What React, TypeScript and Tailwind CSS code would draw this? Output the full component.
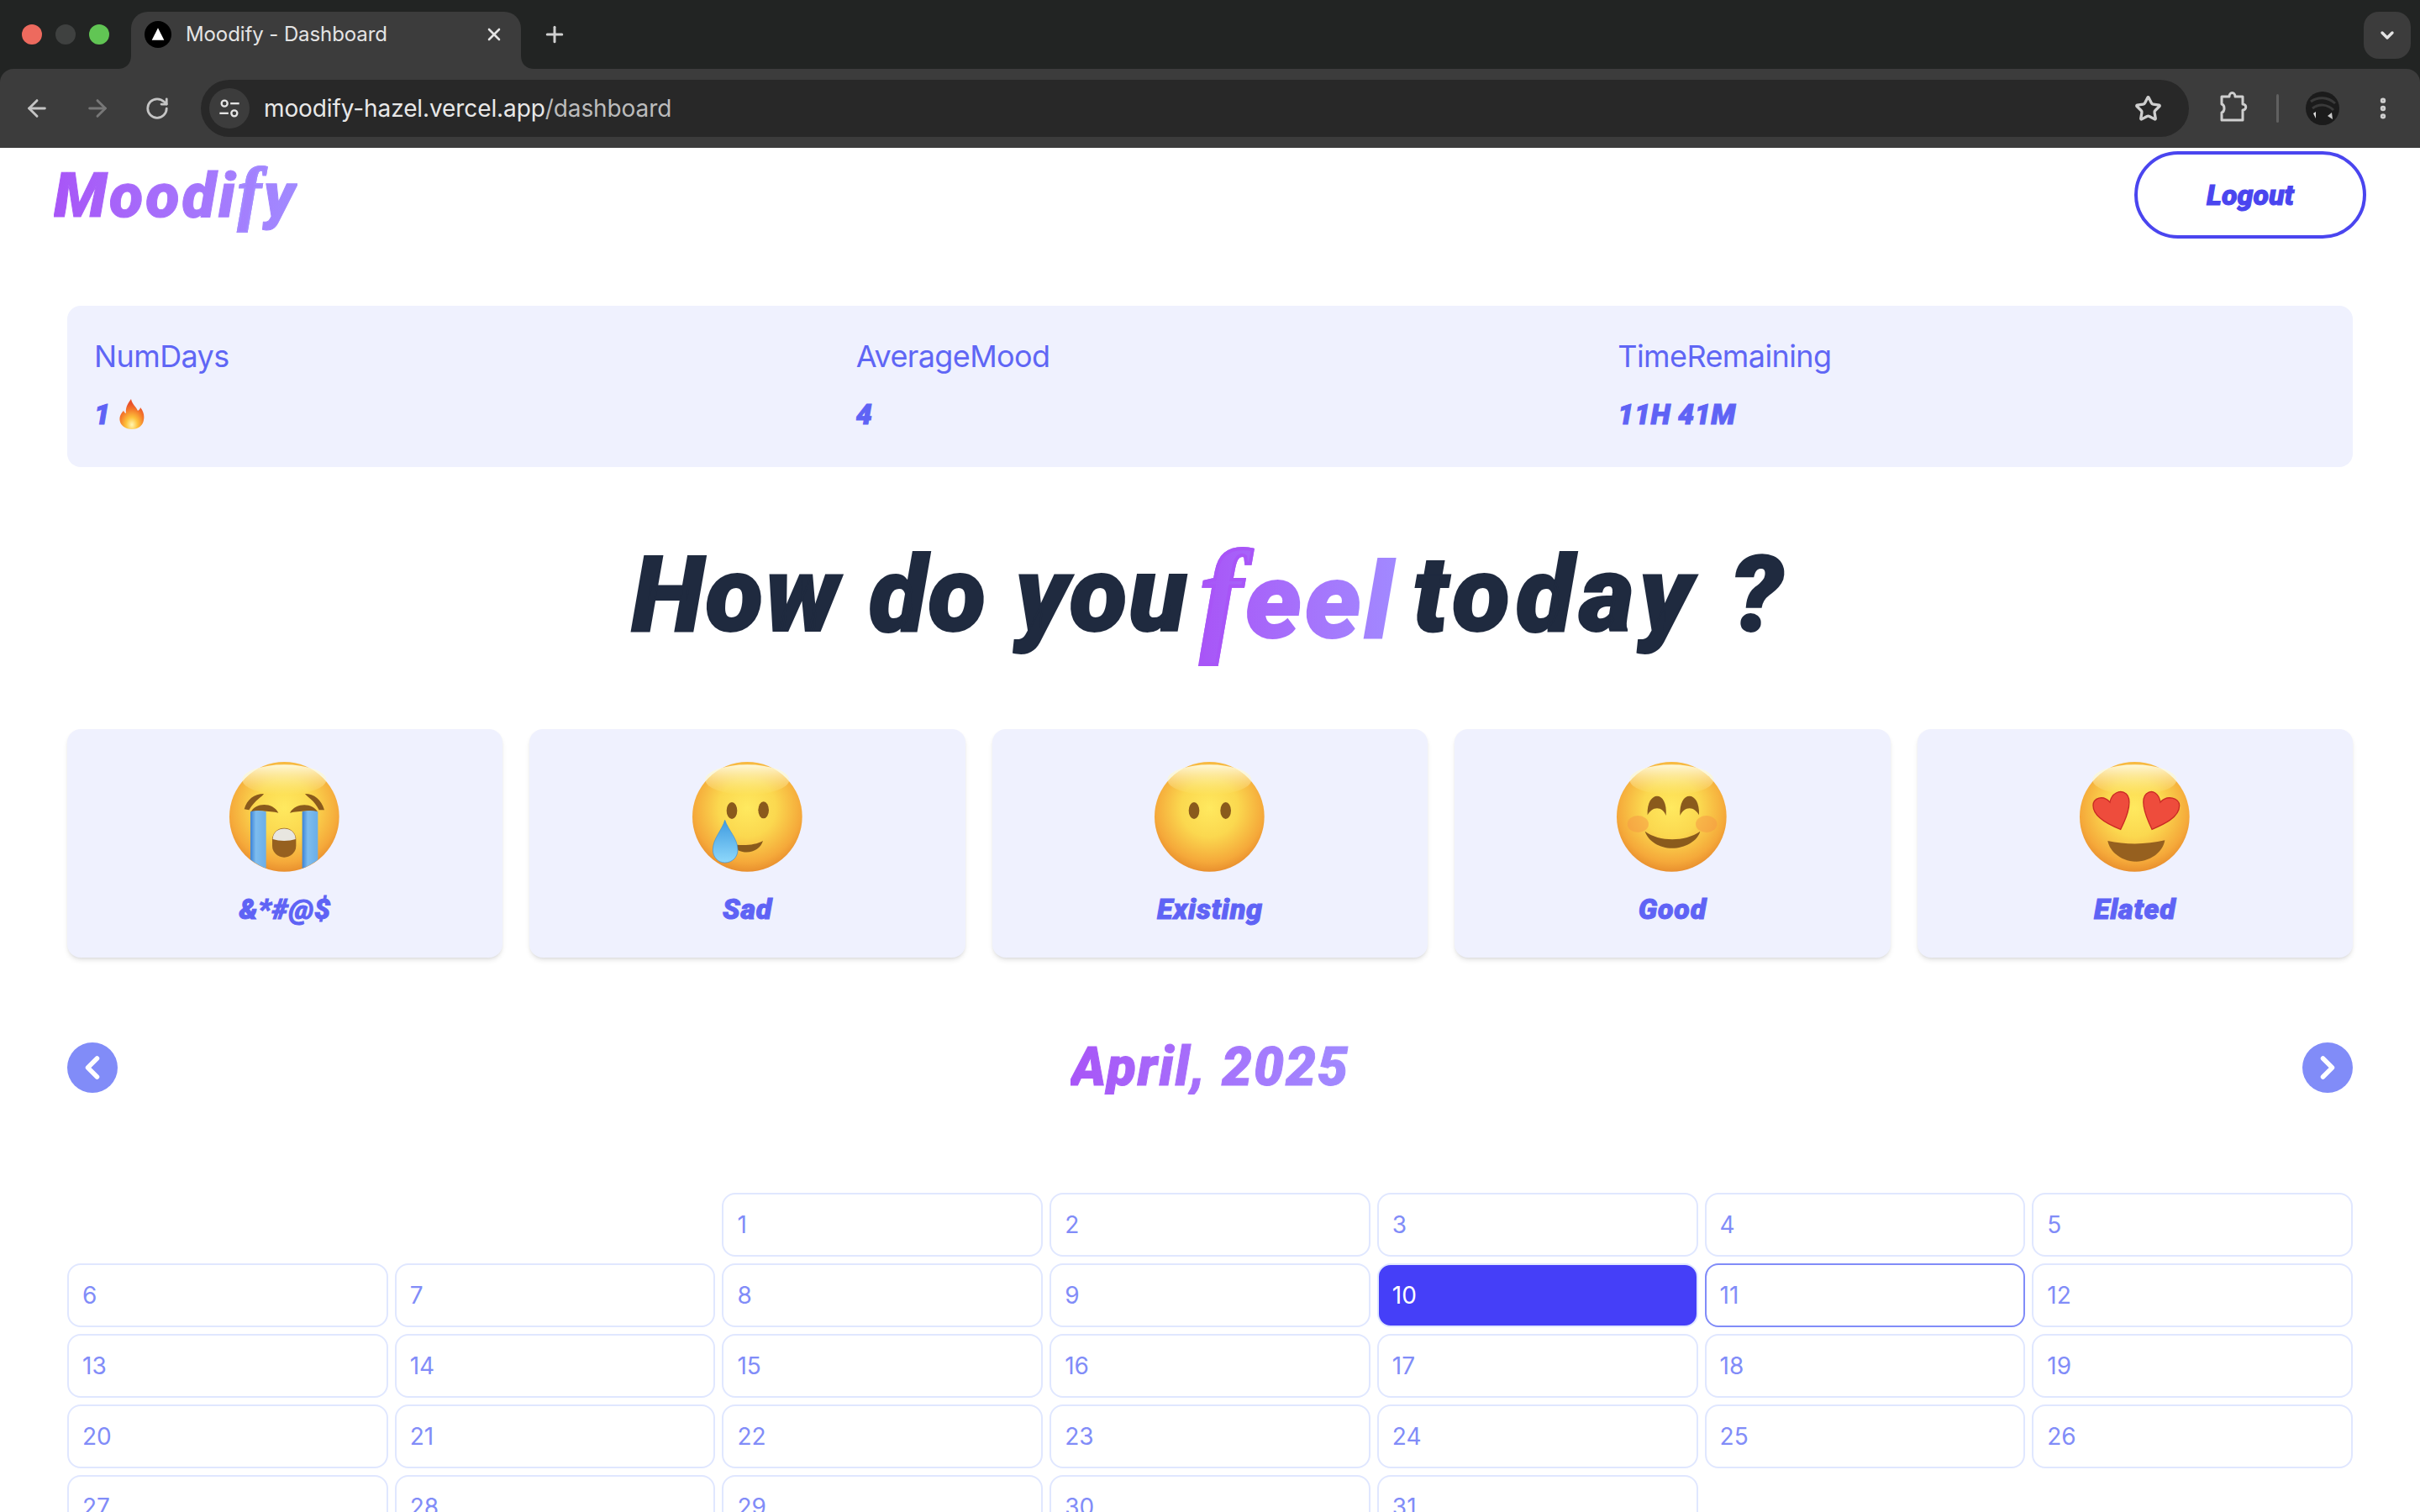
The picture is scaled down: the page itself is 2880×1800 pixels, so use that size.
import React from "react";
import { ArrowLeft, ArrowRight, RotateCw, Star, ChevronDown, ChevronLeft, ChevronRight, X, Plus, EllipsisVertical } from "lucide-react";

const Defs = ({ id }: { id: string }) => (
  <defs>
    <radialGradient id={`${id}f`} cx="50%" cy="42%" r="58%">
      <stop offset="0%" stopColor="#ffe95f" />
      <stop offset="45%" stopColor="#fbd84f" />
      <stop offset="85%" stopColor="#f5a93a" />
      <stop offset="100%" stopColor="#e9902e" />
    </radialGradient>
    <linearGradient id={`${id}h`} x1="0" y1="0" x2="0" y2="1">
      <stop offset="0%" stopColor="#fffbe0" stopOpacity="0.95" />
      <stop offset="100%" stopColor="#fff6a0" stopOpacity="0" />
    </linearGradient>
    <linearGradient id={`${id}t`} x1="0" y1="0" x2="1" y2="0">
      <stop offset="0%" stopColor="#3b82d6" />
      <stop offset="35%" stopColor="#7dbcee" />
      <stop offset="100%" stopColor="#6aaee8" />
    </linearGradient>
    <linearGradient id={`${id}d`} x1="0" y1="0" x2="0" y2="1">
      <stop offset="0%" stopColor="#3f9be0" />
      <stop offset="100%" stopColor="#8ed8fb" />
    </linearGradient>
    <clipPath id={`${id}c`}>
      <circle cx="238" cy="232" r="195" />
    </clipPath>
  </defs>
);

const Face = ({ id, children }: { id: string; children?: React.ReactNode }) => (
  <svg viewBox="0 0 480 480" className="w-40 h-40 shrink-0">
    <Defs id={id} />
    <circle cx="238" cy="232" r="196" fill={`url(#${id}f)`} />
    <ellipse cx="238" cy="100" rx="150" ry="54" fill={`url(#${id}h)`} />
    {children}
  </svg>
);

const brown = "#8a5a1c";

const Crying = () => (
  <Face id="a">
    <path d="M95 205 C105 170 130 150 165 150 C160 160 135 170 112 208 Z" fill={brown} />
    <path d="M381 208 C370 170 345 150 312 150 C318 160 345 172 362 208 Z" fill={brown} />
    <path d="M118 216 C135 182 195 178 217 218 C190 212 150 208 118 216 Z" fill={brown} />
    <path d="M258 218 C280 180 340 182 358 216 C325 208 285 212 258 218 Z" fill={brown} />
    <g clipPath="url(#ac)">
      <path d="M117 214 Q145 206 173 214 L173 430 L117 430 Z" fill="url(#at)" />
      <path d="M302 214 Q330 206 358 214 L358 430 L302 430 Z" fill="url(#at)" />
    </g>
    <rect x="195" y="272" width="85" height="105" rx="42" fill="#96601f" />
    <path d="M197 312 C197 262 278 262 278 312 C255 320 220 320 197 312 Z" fill="#e8e6e0" />
  </Face>
);

const Sad = () => (
  <Face id="b">
    <ellipse cx="183" cy="210" rx="19" ry="30" fill={brown} />
    <ellipse cx="296" cy="208" rx="19" ry="30" fill={brown} />
    <path d="M200 332 C235 335 270 332 294 318 C285 350 245 370 205 352 Z" fill={brown} />
    <path d="M158 244 C170 280 204 310 204 350 C204 378 182 396 158 396 C134 396 115 376 115 350 C115 310 148 280 158 244 Z" fill="url(#bd)" stroke="#3b8fd8" strokeWidth="2" />
  </Face>
);

const Neutral = () => (
  <Face id="c">
    <ellipse cx="183" cy="210" rx="19" ry="30" fill={brown} />
    <ellipse cx="296" cy="210" rx="19" ry="30" fill={brown} />
  </Face>
);

const Good = () => (
  <Face id="d">
    <ellipse cx="118" cy="258" rx="38" ry="30" fill="#f59a45" opacity="0.55" />
    <ellipse cx="362" cy="258" rx="38" ry="30" fill="#f59a45" opacity="0.55" />
    <path d="M152 226 C150 180 168 158 186 158 C205 158 222 182 218 228 C212 212 200 202 186 202 C172 202 160 212 152 226 Z" fill={brown} />
    <path d="M268 228 C266 182 282 158 302 158 C320 158 338 180 336 226 C328 212 316 202 302 202 C288 202 276 212 268 228 Z" fill={brown} />
    <path d="M143 284 C195 322 285 322 340 284 C330 320 285 344 240 344 C195 344 155 320 143 284 Z" fill={brown} />
  </Face>
);

const Love = () => (
  <Face id="e">
    <path d="M188 277 C150 262 90 235 90 192 C90 165 125 152 150 180 C155 150 185 132 208 150 C228 168 220 215 188 277 Z" fill="#ee4c3c" stroke="#c92a24" strokeWidth="4" />
    <path d="M300 277 C275 225 258 170 280 150 C302 132 325 150 330 180 C355 152 398 165 398 192 C398 235 340 260 300 277 Z" fill="#ee4c3c" stroke="#c92a24" strokeWidth="4" />
    <path d="M142 318 C205 332 280 332 346 316 C340 360 290 392 243 392 C195 392 150 360 142 318 Z" fill="#96601f" />
  </Face>
);

const Fire = () => (
  <svg viewBox="0 0 30 36" className="w-[30px] h-[36px] shrink-0">
    <defs>
      <radialGradient id="fg" cx="50%" cy="85%" r="70%">
        <stop offset="0%" stopColor="#fff6b0" />
        <stop offset="35%" stopColor="#fdc13a" />
        <stop offset="75%" stopColor="#f4752a" />
        <stop offset="100%" stopColor="#e9502a" />
      </radialGradient>
    </defs>
    <path d="M14 0 C15 6 20 9 22 14 C24 13 25 11 25 10 C29 15 30 20 29 25 C28 32 22 36 15 36 C7 36 1 31 0.5 25 C0 20 3 16 5 14 C6 16 7 17 8 17 C7 11 10 5 14 0 Z" fill="url(#fg)" />
  </svg>
);

const PuzzleIcon = () => (
  <svg viewBox="0 0 34 40" className="w-[34px] h-[40px] shrink-0 ml-[36px]" fill="none" stroke="#cfcfcf" strokeWidth="3" strokeLinejoin="round">
    <path d="M3 6 H12 C12 0 19 0 19 6 H28 V15 C33 15 33 22 28 22 V34 H3 V25 C7 24 7 16 3 15 Z" />
  </svg>
);

const Avatar = () => (
  <svg viewBox="0 0 40 40" className="w-10 h-10 shrink-0 ml-[32px]">
    <circle cx="20" cy="20" r="20" fill="#1b1b1b" />
    <path d="M6 12 C14 6 26 6 35 14 M8 20 C16 14 26 15 33 22" stroke="#3a3a3a" strokeWidth="3" fill="none" />
    <path d="M9 26 L12 24 L12 32 Z" fill="#e0e0e0" />
    <path d="M26 29 L31 25 L32 33 Z" fill="#c8c8c8" />
  </svg>
);

const moods = [
  { label: "&*#@$", Icon: Crying },
  { label: "Sad", Icon: Sad },
  { label: "Existing", Icon: Neutral },
  { label: "Good", Icon: Good },
  { label: "Elated", Icon: Love },
];

const Chrome = () => (
  <div className="bg-[#222423] font-['Inter',sans-serif]">
    <div className="h-[82px] flex items-start pt-[14px]">
      <div className="flex items-center gap-[16px] pl-[26px] pt-[15px] w-[156px] shrink-0">
        <span className="w-6 h-6 rounded-full bg-[#ed6a5e]" />
        <span className="w-6 h-6 rounded-full bg-[#3f4140]" />
        <span className="w-6 h-6 rounded-full bg-[#61c554]" />
      </div>
      <div className="relative w-[464px] h-[68px] bg-[#3c3c3c] rounded-t-[20px] flex items-center pl-[16px] pr-[20px] pb-[14px]">
        <svg viewBox="0 0 16 16" className="absolute left-[-16px] bottom-0 w-4 h-4">
          <path d="M16 0 V16 H0 C10 16 16 10 16 0 Z" fill="#3c3c3c" />
        </svg>
        <svg viewBox="0 0 16 16" className="absolute right-[-16px] bottom-0 w-4 h-4">
          <path d="M0 0 V16 H16 C6 16 0 10 0 0 Z" fill="#3c3c3c" />
        </svg>
        <span className="w-8 h-8 rounded-full bg-black flex items-center justify-center shrink-0">
          <svg viewBox="0 0 16 16" className="w-[18px] h-[18px]"><path d="M8 1 L14.5 14 H1.5 Z" fill="#fff" /></svg>
        </span>
        <span className="ml-[17px] text-[24px] tracking-[-0.1px] leading-none text-[#e4e4e4] flex-1 whitespace-nowrap">Moodify - Dashboard</span>
        <X size={24} strokeWidth={2.6} className="text-[#e4e4e4]" />
      </div>
      <Plus size={30} strokeWidth={2.4} className="ml-[25px] mt-[12px] text-[#d0d0d0]" />
      <div className="ml-auto mr-[11px] w-[56px] h-[56px] rounded-[18px] bg-[#3c3c3c] flex items-center justify-center">
        <ChevronDown size={24} strokeWidth={3.4} className="text-[#e4e4e4]" />
      </div>
    </div>
    <div className="h-[94px] bg-[#3c3c3c] rounded-t-[16px] flex items-center pl-[28px] pr-[28px]">
      <ArrowLeft size={32} strokeWidth={2.2} className="text-[#c4c4c4]" />
      <ArrowRight size={32} strokeWidth={2.2} className="text-[#777777] ml-[40px]" />
      <RotateCw size={30} strokeWidth={2.2} className="text-[#c4c4c4] ml-[40px]" />
      <div className="ml-[37px] h-[68px] flex-1 bg-[#282828] rounded-full flex items-center pl-[10px] pr-[32px]">
        <span className="w-12 h-12 rounded-full bg-[#3c3c3c] flex items-center justify-center shrink-0">
          <svg viewBox="0 0 24 24" className="w-7 h-7" fill="none" stroke="#e4e4e4" strokeWidth="2">
            <circle cx="7" cy="7" r="3" /><path d="M13 7 H22" /><path d="M2 17 H11" /><circle cx="17" cy="17" r="3" />
          </svg>
        </span>
        <span className="ml-[17px] text-[28px] tracking-[-0.1px] leading-none text-[#e8e8e8] whitespace-nowrap -mt-[1px]">moodify-hazel.vercel.app<span className="text-[#bcbcbc]">/dashboard</span></span>
        <Star size={33} strokeWidth={2.4} className="ml-auto text-[#cfcfcf]" />
      </div>
      <PuzzleIcon />
      <span className="ml-[34px] w-[3px] h-[34px] bg-[#606060] rounded-full" />
      <Avatar />
      <EllipsisVertical size={32} strokeWidth={2.8} className="ml-[36px] text-[#cfcfcf]" />
    </div>
  </div>
);

export default function App() {
  const cells: (number | null)[] = [null, null, ...Array.from({ length: 31 }, (_, i) => i + 1)];
  const display = "font-['Roboto',sans-serif] font-black italic";
  return (
    <div className="h-[1800px] w-[2880px] overflow-hidden bg-white flex flex-col">
      <Chrome />
      <main className="flex-1 font-['Inter',sans-serif]">
        <header className="flex items-start justify-between pl-[64px] pr-[64px] pt-[4px]">
          <div className={`${display} mt-[5px] text-[74px] leading-[96px] tracking-[3px] bg-gradient-to-r from-[#a855f7] to-[#a18aff] bg-clip-text text-transparent [-webkit-text-stroke:1px_transparent]`}>
            Moodi<span className="font-['Liberation_Serif',serif] font-bold italic text-[84px] leading-none [-webkit-text-stroke:2px_#a48aff]">f</span>y
          </div>
          <button className={`${display} w-[276px] h-[104px] rounded-full border-4 border-[#4a45ef] text-[#4a45ef] text-[34px] [-webkit-text-stroke:1px_#4a45ef]`}>Logout</button>
        </header>
        <div className="px-20">
          <section className="mt-[80px] h-[192px] rounded-2xl bg-[#eff1fe] grid grid-cols-3 gap-16 px-8 pt-[40px]">
            {[
              ["NumDays", "1"],
              ["AverageMood", "4"],
              ["TimeRemaining", "11H 41M"],
            ].map(([k, v]) => (
              <div key={k}>
                <div className="text-[36px] leading-[40px] tracking-[-0.6px] text-[#5f66f5]">{k}</div>
                <div className={`${display} mt-[29px] flex items-center gap-[10px] text-[34px] leading-[40px] tracking-[0.5px] text-[#5f63f5] [-webkit-text-stroke:1px_#5f63f5]`}>
                  {v}
                  {k === "NumDays" && <Fire />}
                </div>
              </div>
            ))}
          </section>
          <h1 className={`${display} h-[312px] pb-[8px] flex items-center justify-center gap-[14px] text-[126px] leading-none text-[#1f2a3f] [-webkit-text-stroke:2px_#1f2a3f] whitespace-nowrap`}>
            <span className="tracking-[2px]">How do you</span>
            <span className="tracking-[4px] bg-gradient-to-r from-[#a855f7] to-[#a18aff] bg-clip-text text-transparent [-webkit-text-stroke:2px_transparent] pb-[40px] pr-[6px] -mb-[40px]">
              <span className="font-['Liberation_Serif',serif] font-bold italic text-[150px] [-webkit-text-stroke:4px_#a855f7]">f</span>eel
            </span>
            <span className="tracking-[7px]">today ?</span>
          </h1>
          <section className="grid grid-cols-5 gap-8">
            {moods.map(({ label, Icon }) => (
              <div key={label} className="h-[272px] rounded-2xl bg-[#eff1fe] shadow-md flex flex-col items-center pt-[27px]">
                <Icon />
                <div className={`${display} mt-[5px] text-[34px] leading-[44px] tracking-[0.8px] text-[#5f63f5] [-webkit-text-stroke:1px_#5f63f5]`}>{label}</div>
              </div>
            ))}
          </section>
          <section className="mt-[101px] flex items-center justify-between h-[60px]">
            <button className="w-[60px] h-[60px] rounded-full bg-[#818cf8] flex items-center justify-center">
              <ChevronLeft size={44} strokeWidth={3} className="text-white" />
            </button>
            <div className={`${display} text-[64px] leading-none tracking-[2px] bg-gradient-to-r from-[#a855f7] to-[#a18aff] bg-clip-text text-transparent [-webkit-text-stroke:1px_transparent]`}>April, 2025</div>
            <button className="w-[60px] h-[60px] rounded-full bg-[#818cf8] flex items-center justify-center">
              <ChevronRight size={44} strokeWidth={3} className="text-white" />
            </button>
          </section>
          <section className="mt-[119px] grid grid-cols-7 gap-2">
            {cells.map((d, i) =>
              d === null ? (
                <div key={`e${i}`} />
              ) : (
                <div
                  key={d}
                  className={
                    d === 10
                      ? "h-[76px] rounded-2xl border-2 border-[#e0e7ff] bg-[#453ff8] text-white text-[28px] pl-4 flex items-center"
                      : d === 11
                      ? "h-[76px] rounded-2xl border-2 border-[#818cf8] text-[#818cf8] text-[28px] pl-4 flex items-center"
                      : "h-[76px] rounded-2xl border-2 border-[#e0e7ff] text-[#818cf8] text-[28px] pl-4 flex items-center"
                  }
                >
                  {d}
                </div>
              )
            )}
          </section>
        </div>
      </main>
    </div>
  );
}
